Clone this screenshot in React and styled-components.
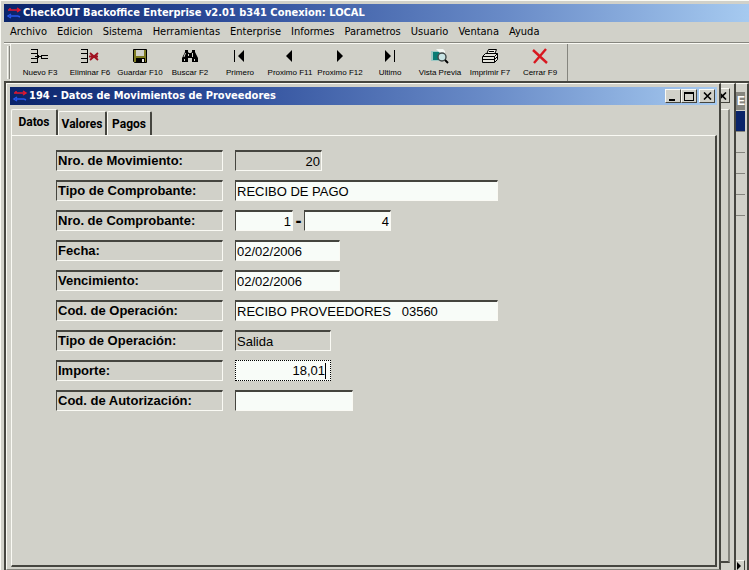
import React from 'react';
import styled, { createGlobalStyle } from 'styled-components';

const face = '#d1d1c9';
const dark = '#45453f';
const mid = '#85857e';
const light = '#fafaf4';
const ui = '"DejaVu Sans Condensed", "DejaVu Sans", sans-serif';
const sans = '"Liberation Sans", Arial, sans-serif';

const GlobalStyle = createGlobalStyle`
  * { box-sizing: border-box; }
  body { margin: 0; background: ${face}; color: #000; font-family: ${sans}; overflow: hidden; }
  button, input { font: inherit; color: inherit; margin: 0; padding: 0; border: 0; border-radius: 0; background: none; }
  svg { flex: none; }
`;

const Shell = styled.div`
  display: flex;
  flex-direction: column;
  height: 100vh;
  padding: 3px 0 0 3px;
  border-top: 1px solid ${light};
  border-left: 1px solid ${light};
  background: ${face};
`;

const TitleBar = styled.header`
  display: flex;
  align-items: center;
  flex: none;
  height: 18px;
  padding: 0 2px;
  gap: 1px;
  background: linear-gradient(to right, #0a246a, #2b4a98 28%, #6a8cc8 68%, #a6caf0);
  color: #fff;
`;

const TitleText = styled.h1`
  flex: 1;
  margin: 0;
  font: bold 11px/18px ${ui};
  white-space: nowrap;
`;

const MenuBar = styled.nav`
  display: flex;
  flex: none;
  height: 21px;
  padding: 0 6px;
  gap: 10px;
  border-bottom: 1px solid ${mid};
`;

const MenuItem = styled.button`
  font: 11px/20px ${ui};
  white-space: nowrap;
`;

const ToolBar = styled.div`
  display: flex;
  flex: none;
  height: 38px;
  border-top: 1px solid ${light};
`;

const Tools = styled.div`
  display: flex;
  padding: 0 2px 0 4px;
  border-left: 1px solid ${light};
  border-right: 1px solid ${mid};
`;

const Grip = styled.div`
  width: 3px;
  margin: 2px 0 2px 3px;
  border-left: 1px solid ${light};
  border-right: 1px solid ${mid};
`;

const ToolButton = styled.button`
  display: flex;
  flex-direction: column;
  align-items: center;
  width: 50px;
  padding-top: 4px;
  gap: 3px;
  font: 8px/12px ${sans};
  white-space: nowrap;
`;

const Desktop = styled.main`
  display: flex;
  flex: 1;
  min-height: 0;
  border-top: 2px solid ${dark};
  border-left: 2px solid ${dark};
`;

const ChildWindow = styled.section`
  display: flex;
  flex-direction: column;
  flex: 1;
  min-width: 0;
  padding: 3px 2px 2px 3px;
  border-top: 1px solid ${light};
  border-left: 1px solid ${light};
  border-right: 2px solid ${dark};
  border-bottom: 1px solid ${mid};
`;

const Controls = styled.div`
  display: flex;
  & > :last-child { margin-left: 2px; }
`;

const ControlButton = styled.button`
  display: flex;
  align-items: center;
  justify-content: center;
  width: 16px;
  height: 14px;
  background: ${face};
  border: 1px solid;
  border-color: ${light} ${dark} ${dark} ${light};
`;

const Tabs = styled.div`
  display: flex;
  align-items: flex-end;
  flex: none;
  height: 30px;
  padding-left: 1px;
`;

const Tab = styled.button`
  height: ${p => (p.$active ? 27 : 24)}px;
  width: ${p => p.$width}px;
  margin-bottom: ${p => (p.$active ? -1 : 0)}px;
  padding-bottom: ${p => (p.$active ? 2 : 0)}px;
  background: ${face};
  font: bold 12px/18px Roboto, ${sans};
  border-top: 1px solid ${light};
  border-left: 1px solid ${light};
  border-right: 2px solid ${dark};
  border-radius: 2px 2px 0 0;
`;

const Page = styled.form`
  display: flex;
  flex-direction: column;
  flex: 1;
  gap: 9px;
  margin-left: 1px;
  padding: 14px 44px;
  border-top: 1px solid ${light};
  border-left: 1px solid ${light};
  border-right: 2px solid ${dark};
  border-bottom: 2px solid ${dark};
`;

const Row = styled.div`
  display: flex;
  align-items: center;
  gap: 12px;
`;

const Label = styled.label`
  width: 167px;
  height: 21px;
  padding-left: 1px;
  border: 1px solid;
  border-width: 2px 1px 1px 1px;
  border-color: ${dark} ${light} ${light} ${dark};
  font: bold 13px/17px ${sans};
  white-space: nowrap;
`;

const Field = styled.input`
  width: ${p => p.$width}px;
  height: 21px;
  padding: 0 1px;
  border: 1px solid;
  border-width: 2px 1px 1px 1px;
  border-color: ${dark} ${light} ${light} ${dark};
  background: ${p => (p.readOnly ? face : '#f8fcf8')};
  font: 13px/16px ${sans};
  text-align: ${p => (p.$right ? 'right' : 'left')};
  outline: none;
`;

const Pair = styled.div`
  display: flex;
  align-items: center;
`;

const Dash = styled.span`
  width: 11px;
  font: bold 18px/18px ${sans};
  text-align: center;
`;

const FocusBox = styled.div`
  display: flex;
  align-items: center;
  width: 96px;
  height: 21px;
  padding-right: 4px;
  border: 1px dotted #000;
  background: #f8fcf8;
`;

const FocusInput = styled.input`
  flex: 1;
  min-width: 0;
  font: 13px/16px ${sans};
  text-align: right;
  outline: none;
`;

const Caret = styled.span`
  width: 1px;
  height: 16px;
  background: #000;
`;

const BackWindow = styled.aside`
  display: flex;
  flex-direction: column;
  flex: none;
  width: 15px;
  padding: 4px 4px 7px 0;
  border-top: 1px solid ${light};
  border-right: 2px solid ${dark};
`;

const ClippedButton = styled.button`
  display: flex;
  justify-content: flex-end;
  align-items: center;
  width: 9px;
  height: 15px;
  padding-right: 2px;
  overflow: hidden;
  border: 1px solid;
  border-left: 0;
  border-color: ${light} ${dark} ${dark};
`;

const BackPage = styled.div`
  flex: 1;
  width: 9px;
  margin-top: 6px;
  border-top: 1px solid ${light};
  border-right: 2px solid ${mid};
  border-bottom: 2px solid ${dark};
`;

const GridWindow = styled.aside`
  display: flex;
  flex-direction: column;
  flex: none;
  width: 13px;
  padding: 8px 2px 0 0;
  border-top: 1px solid ${light};
  border-right: 2px solid ${dark};
`;

const GridHead = styled.div`
  height: 18px;
  padding-left: 1px;
  overflow: hidden;
  background: #85857e;
  color: #fff;
  font: bold 12px/18px ${sans};
  white-space: nowrap;
`;

const GridCell = styled.div`
  height: 21px;
  background: ${p => (p.$selected ? '#0a246a' : face)};
  border-bottom: 1px solid ${mid};
  margin-top: ${p => (p.$selected ? 1 : 0)}px;
`;

const ScrollRight = styled.button`
  display: flex;
  align-items: center;
  width: 9px;
  height: 10px;
  margin-top: auto;
  border: 1px solid;
  border-width: 1px 1px 0 0;
  border-color: ${light} ${dark} ${dark};
`;

const AppIcon = () => (
  <svg width="16" height="14" viewBox="0 0 16 14" aria-hidden="true" fill="none">
    <path d="M2 4h12M11 2l3 2-3 2M4 2v2" stroke="#e01830" strokeWidth="1.5" />
    <path d="M4 10h8M5 8l-3 2 3 2M12 10l2 1" stroke="#2858f0" strokeWidth="1.5" />
  </svg>
);

const Close = () => (
  <svg width="9" height="8" viewBox="0 0 9 8" aria-hidden="true">
    <path d="M1 .5l7 7M8 .5l-7 7" stroke="#000" strokeWidth="1.6" />
  </svg>
);

const Rows = () => <path d="M0 1.5h7M0 5.5h7M0 10.5h7M0 14.5h7M6.5 1v14" stroke="#000" />;

const icons = {
  add: <><Rows /><path d="M4 8.5h6M7.5 7v3M11 7.5h6M11 10.5h6M10.500 7v4" stroke="#000" /></>,
  remove: <><Rows /><path d="M9 5l8 7M17 5l-8 7M8 8.500h9" stroke="#a01020" strokeWidth="1.8" /></>,
  save: (
    <>
      <path d="M2.5 1.5h13v13h-12l-1-1z" fill="#7d7a20" stroke="#000" />
      <path d="M5 2h8v6H5z" fill="#d1d1c9" />
      <path d="M5 10h9v4H5z" fill="#000" />
      <path d="M11 11h2v3h-2z" fill="#e8e8e0" />
    </>
  ),
  find: (
    <>
      <path d="M4 2h3v2l1 1h2l1-1V2h3v2l3 6v4h-6v-4H7v4H1v-4l3-6z" fill="#000" />
      <path d="M4.5 5L3 9M11.5 5v4M3.500 11v2M13.500 11v2M7.500 6v2" stroke="#d1d1c9" />
    </>
  ),
  first: <path d="M3 2h1v12H3zM13 2v12L7 8z" fill="#000" />,
  prev: <path d="M11 2v12L5 8z" fill="#000" />,
  next: <path d="M6 2v12l6-6z" fill="#000" />,
  last: <path d="M4 2v12l6-6zM13 2h1v12h-1z" fill="#000" />,
  preview: (
    <>
      <path d="M0 3h13v10H0z" fill="#9cc8c4" />
      <path d="M2 4h9v8H2z" fill="#087c74" />
      <path d="M5 1h7l2 2v2H9z" fill="#f4f8f4" />
      <circle cx="11" cy="9" r="4" fill="#c8e4e4" stroke="#404848" strokeWidth="1.4" />
      <path d="M14 12l3 3" stroke="#000" strokeWidth="2" />
    </>
  ),
  print: (
    <>
      <path d="M5.500 6.500L7.500 1.500h8l-2 5" fill="#f0f0e8" stroke="#000" />
      <path d="M1.500 8.500l3-3h12v6l-3 3h-12z" fill="#e4e4dc" stroke="#000" />
      <path d="M8 3.500h5M7 5.500h5M2 8.500h11.500v6M13.500 8.500l3-3M2 11.500h11M14 11l2-2" stroke="#000" />
    </>
  ),
  close: <path d="M2 2l14 13M15 1L3 15" stroke="#d81820" strokeWidth="2.4" />,
};

const tools = [
  ['Nuevo F3', 'add'], ['Eliminar F6', 'remove'], ['Guardar F10', 'save'], ['Buscar F2', 'find'],
  ['Primero', 'first'], ['Proximo F11', 'prev'], ['Proximo F12', 'next'], ['Ultimo', 'last'],
  ['Vista Previa', 'preview'], ['Imprimir F7', 'print'], ['Cerrar F9', 'close'],
];

const menus = ['Archivo', 'Edicion', 'Sistema', 'Herramientas', 'Enterprise', 'Informes', 'Parametros', 'Usuario', 'Ventana', 'Ayuda'];

function FormRow({ id, label, children, ...field }) {
  return (
    <Row>
      <Label htmlFor={id}>{label}</Label>
      {children || <Field id={id} {...field} />}
    </Row>
  );
}

export default function App() {
  return (
    <Shell>
      <GlobalStyle />
      <TitleBar>
        <AppIcon />
        <TitleText>CheckOUT Backoffice Enterprise v2.01 b341 Conexion: LOCAL</TitleText>
      </TitleBar>
      <MenuBar>
        {menus.map(m => <MenuItem key={m} type="button">{m}</MenuItem>)}
      </MenuBar>
      <ToolBar role="toolbar">
        <Grip />
        <Tools>
          {tools.map(([label, icon]) => (
            <ToolButton key={label} type="button">
              <svg width="18" height="16" viewBox="0 0 18 16" fill="none" aria-hidden="true">{icons[icon]}</svg>
              {label}
            </ToolButton>
          ))}
        </Tools>
      </ToolBar>
      <Desktop>
        <ChildWindow>
          <TitleBar>
            <AppIcon />
            <TitleText as="h2">194 - Datos de Movimientos de Proveedores</TitleText>
            <Controls>
              <ControlButton type="button" aria-label="Minimizar">
                <svg width="10" height="9" viewBox="0 0 10 9"><path d="M1 7h6v2H1z" /></svg>
              </ControlButton>
              <ControlButton type="button" aria-label="Maximizar">
                <svg width="10" height="9" viewBox="0 0 10 9"><path d="M0 0h10v9H0zM1 2v6h8V2z" fillRule="evenodd" /></svg>
              </ControlButton>
              <ControlButton type="button" aria-label="Cerrar"><Close /></ControlButton>
            </Controls>
          </TitleBar>
          <Tabs role="tablist">
            <Tab type="button" role="tab" aria-selected="true" $active $width={47}>Datos</Tab>
            <Tab type="button" role="tab" aria-selected="false" $width={49}>Valores</Tab>
            <Tab type="button" role="tab" aria-selected="false" $width={45}>Pagos</Tab>
          </Tabs>
          <Page>
            <FormRow id="mov" label="Nro. de Movimiento:" $width={87} $right readOnly defaultValue="20" />
            <FormRow id="tipo" label="Tipo de Comprobante:" $width={263} defaultValue="RECIBO DE PAGO" />
            <FormRow id="comp" label="Nro. de Comprobante:">
              <Pair>
                <Field id="comp" $width={58} $right defaultValue="1" />
                <Dash>-</Dash>
                <Field aria-label="Nro. de Comprobante, segunda parte" $width={87} $right defaultValue="4" />
              </Pair>
            </FormRow>
            <FormRow id="fecha" label="Fecha:" $width={105} defaultValue="02/02/2006" />
            <FormRow id="venc" label="Vencimiento:" $width={105} defaultValue="02/02/2006" />
            <FormRow id="codop" label="Cod. de Operación:" $width={263} defaultValue={'RECIBO PROVEEDORES\u00a0\u00a0\u00a003560'} />
            <FormRow id="tipoop" label="Tipo de Operación:" $width={96} readOnly defaultValue="Salida" />
            <FormRow id="importe" label="Importe:">
              <FocusBox>
                <FocusInput id="importe" defaultValue="18,01" />
                <Caret />
              </FocusBox>
            </FormRow>
            <FormRow id="auto" label="Cod. de Autorización:" $width={118} defaultValue="" />
          </Page>
        </ChildWindow>
        <BackWindow>
          <ClippedButton type="button" aria-label="Cerrar ventana"><Close /></ClippedButton>
          <BackPage />
        </BackWindow>
        <GridWindow>
          <GridHead>E(</GridHead>
          <GridCell $selected />
          <GridCell /><GridCell /><GridCell /><GridCell />
          <ScrollRight type="button" aria-label="Desplazar a la derecha">
            <svg width="5" height="8" viewBox="0 0 5 8"><path d="M1 0v8l4-4z" /></svg>
          </ScrollRight>
        </GridWindow>
      </Desktop>
    </Shell>
  );
}
